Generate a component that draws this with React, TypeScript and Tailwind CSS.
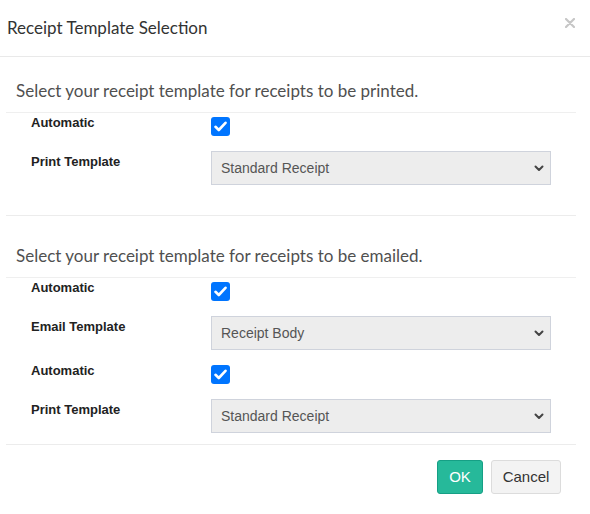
import React from "react";

const headFont = { fontFamily: "Lato, 'Noto Sans', sans-serif" };

const Check = () => (
    <div className="mt-[4px] w-[19px] h-[19px] rounded-[3px] bg-[#0075ff] flex items-center justify-center">
        <svg width="13" height="11" viewBox="0 0 13 11" fill="none">
            <path d="M1.5 5.8 L4.8 9 L11.5 1.8" stroke="white" strokeWidth="2.6" strokeLinecap="round" strokeLinejoin="round" />
        </svg>
    </div>
);

const Select = ({ value }: { value: string }) => (
    <div className="w-[340px] h-[34px] border border-[#cfd3dc] bg-[#ededed] flex items-center justify-between pl-[9px] pr-[6px] text-[14px] text-[#555] font-['Liberation_Sans',Arial,sans-serif]">
        <span>{value}</span>
        <svg width="10" height="7" viewBox="0 0 10 7" fill="none">
            <path d="M1.5 1.5 L5 5 L8.5 1.5" stroke="#444" strokeWidth="2" strokeLinecap="round" strokeLinejoin="round" />
        </svg>
    </div>
);

const Label = ({ children, offset }: { children: React.ReactNode; offset?: boolean }) => (
    <div className={`w-[205px] pl-[25px] text-[13px] leading-[20px] font-bold text-[#222] font-['Liberation_Sans',Arial,sans-serif] ${offset ? "mt-[1px]" : ""}`}>
        {children}
    </div>
);

const CheckRow = ({ label }: { label: string }) => (
    <div className="flex items-start mb-[15px]">
        <Label>{label}</Label>
        <Check />
    </div>
);

const SelectRow = ({ label, value }: { label: string; value: string }) => (
    <div className="flex items-start mb-[11px]">
        <Label offset>{label}</Label>
        <Select value={value} />
    </div>
);

export default function App() {
    return (
        <div className="w-[590px] h-[514px] bg-white overflow-hidden">
            {/* Header */}
            <div className="h-[57px] border-b border-[#e9e9e9] flex items-start justify-between pl-[7px] pr-[15px]">
                <h4 className="pt-[16px] text-[17px] leading-[24px] text-[#333]" style={headFont}>
                    Receipt Template Selection
                </h4>
                <svg className="mt-[18px]" width="10" height="10" viewBox="0 0 10 10">
                    <path d="M1 1 L9 9 M9 1 L1 9" stroke="#c6c6c6" strokeWidth="2.2" strokeLinecap="round" />
                </svg>
            </div>

            <div className="pl-[6px] pr-[14px]">
                {/* Printed */}
                <div className="border-b border-[#ececec] pb-[19px]">
                    <div className="pl-[10px] pt-[21px] pb-[8px] leading-[26px] text-[17px] text-[#505050] border-b border-[#efefef]" style={headFont}>
                        Select your receipt template for receipts to be printed.
                    </div>
                    <CheckRow label="Automatic" />
                    <SelectRow label="Print Template" value="Standard Receipt" />
                </div>

                {/* Emailed */}
                <div className="border-b border-[#ececec]">
                    <div className="pl-[10px] pt-[27px] pb-[8px] leading-[26px] text-[17px] text-[#505050] border-b border-[#efefef]" style={headFont}>
                        Select your receipt template for receipts to be emailed.
                    </div>
                    <CheckRow label="Automatic" />
                    <SelectRow label="Email Template" value="Receipt Body" />
                    <CheckRow label="Automatic" />
                    <SelectRow label="Print Template" value="Standard Receipt" />
                </div>

                {/* Footer */}
                <div className="flex justify-end gap-[8px] pt-[15px] pr-[15px] font-['Liberation_Sans',Arial,sans-serif] text-[15px]">
                    <button className="w-[46px] h-[34px] rounded-[3px] bg-[#26b99a] border border-[#169f85] text-white">
                        OK
                    </button>
                    <button className="w-[70px] h-[34px] rounded-[3px] bg-[#f3f3f3] border border-[#dcdcdc] text-[#333]">
                        Cancel
                    </button>
                </div>
            </div>
        </div>
    );
}
